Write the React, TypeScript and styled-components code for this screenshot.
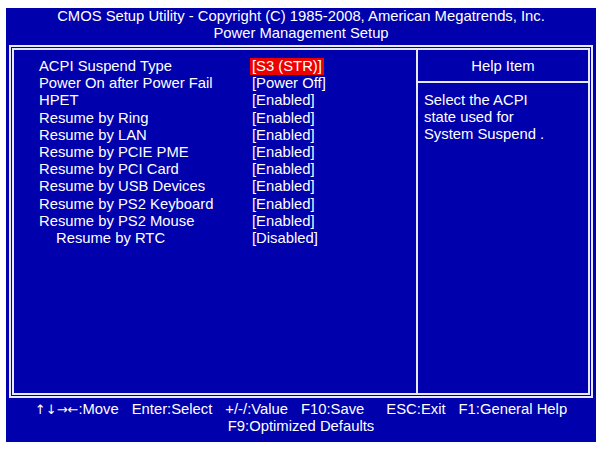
import React from "react";
import styled, { createGlobalStyle } from "styled-components";

const Global = createGlobalStyle`
  html, body { margin: 0; padding: 0; background: #ffffff; }
  body { font-family: "Liberation Sans", Arial, sans-serif; }
`;

const Page = styled.div`
  padding: 8px 0 0 6px;
`;

const Screen = styled.div`
  width: 590px;
  height: 434px;
  background: #0000ad;
  color: #ffffff;
  font-size: 14.8px;
  display: flex;
  flex-direction: column;
  box-sizing: border-box;
  padding: 0 3px;
`;

const Header = styled.div`
  height: 37px;
  display: flex;
  flex-direction: column;
  align-items: center;
  line-height: 16.5px;
  padding-top: 0;
  box-sizing: border-box;
`;

const Frame = styled.div`
  height: 353px;
  border: 5px double #e8e8ff;
  box-sizing: border-box;
  display: grid;
  grid-template-columns: 404px 1fr;
`;

const Main = styled.div`
  border-right: 2px solid #e8e8ff;
  padding: 8px 0 0 25px;
`;

const Row = styled.div`
  display: grid;
  grid-template-columns: 211px auto;
  line-height: 17.2px;
  height: 17.2px;
`;

const Label = styled.div<{ $indent?: boolean }>`
  padding-left: ${(p) => (p.$indent ? 17 : 0)}px;
  white-space: nowrap;
`;

const Value = styled.div<{ $active?: boolean }>`
  justify-self: start;
  padding: 0 2px;
  background: ${(p) => (p.$active ? "#ee0000" : "transparent")};
  white-space: nowrap;
`;

const Help = styled.div`
  display: flex;
  flex-direction: column;
`;

const HelpTitle = styled.div`
  height: 33px;
  border-bottom: 2px solid #e8e8ff;
  display: flex;
  align-items: center;
  justify-content: center;
  padding-top: 1px;
  box-sizing: border-box;
`;

const HelpText = styled.div`
  padding: 9px 0 0 6px;
  line-height: 17.2px;
`;

const Footer = styled.div`
  flex: 1;
  display: flex;
  flex-direction: column;
  align-items: center;
  justify-content: center;
  line-height: 17px;
  padding-bottom: 4px;
`;

const KeyLine = styled.div`
  display: flex;
  gap: 13px;
  white-space: nowrap;
`;

const Key = styled.span<{ $extra?: number }>`
  padding-left: ${(p) => p.$extra ?? 0}px;
`;

const Arrows = styled.span`
  font-family: "DejaVu Sans", sans-serif;
  font-size: 13px;
`;

const items: { label: string; value: string; indent?: boolean }[] = [
  { label: "ACPI Suspend Type", value: "[S3 (STR)]" },
  { label: "Power On after Power Fail", value: "[Power Off]" },
  { label: "HPET", value: "[Enabled]" },
  { label: "Resume by Ring", value: "[Enabled]" },
  { label: "Resume by LAN", value: "[Enabled]" },
  { label: "Resume by PCIE PME", value: "[Enabled]" },
  { label: "Resume by PCI Card", value: "[Enabled]" },
  { label: "Resume by USB Devices", value: "[Enabled]" },
  { label: "Resume by PS2 Keyboard", value: "[Enabled]" },
  { label: "Resume by PS2 Mouse", value: "[Enabled]" },
  { label: "Resume by RTC", value: "[Disabled]", indent: true },
];

export default function App() {
  return (
    <Page>
      <Global />
      <Screen>
        <Header>
          <div>CMOS Setup Utility - Copyright (C) 1985-2008, American Megatrends, Inc.</div>
          <div>Power Management Setup</div>
        </Header>
        <Frame>
          <Main>
            {items.map((it, i) => (
              <Row key={it.label}>
                <Label $indent={it.indent}>{it.label}</Label>
                <Value $active={i === 0}>{it.value}</Value>
              </Row>
            ))}
          </Main>
          <Help>
            <HelpTitle>Help Item</HelpTitle>
            <HelpText>
              Select the ACPI
              <br />
              state used for
              <br />
              System Suspend .
            </HelpText>
          </Help>
        </Frame>
        <Footer>
          <KeyLine>
            <Key>
              <Arrows>↑↓→←</Arrows>:Move
            </Key>
            <Key>Enter:Select</Key>
            <Key>+/-/:Value</Key>
            <Key>F10:Save</Key>
            <Key $extra={9}>ESC:Exit</Key>
            <Key>F1:General Help</Key>
          </KeyLine>
          <div>F9:Optimized Defaults</div>
        </Footer>
      </Screen>
    </Page>
  );
}
